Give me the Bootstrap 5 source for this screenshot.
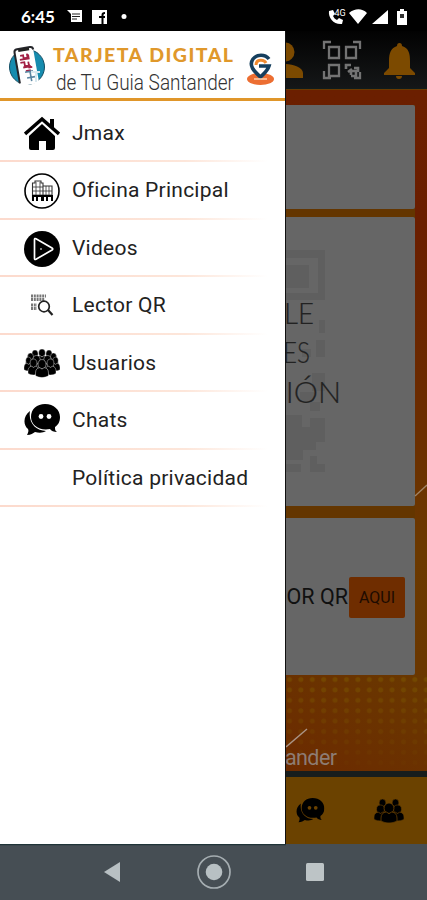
<!DOCTYPE html>
<html lang="es">
<head>
<meta charset="utf-8">
<meta name="viewport" content="width=device-width, initial-scale=1">
<title>Tarjeta Digital</title>
<link href="https://cdn.jsdelivr.net/npm/bootstrap@5.3.0/dist/css/bootstrap.min.css" rel="stylesheet">
<style>
body{width:427px;height:900px;overflow:hidden;font-family:Roboto,"Noto Sans",sans-serif;background:#000;color:#000}
svg{display:block;flex:none}
.status{height:31px;padding:2px 19px 0 21px;background:#000;color:#fff}
.clock{font:700 17px/1 Lato,sans-serif;width:46px}
.stage{height:813px}
.drawer{width:285px;background:#fff}
.brand{height:70px;border-bottom:3px solid #e0962a}
.menu{padding-top:4px}
.item{height:57.45px;padding-left:24px;font-size:21px;letter-spacing:.24px;color:#222;background:linear-gradient(90deg,#fcdacd,#fde6da 65%,#fff 94%) bottom/100% 2px no-repeat}
.ico{width:36px;height:36px;margin-right:12px}
.page-side{width:142px;border-left:1px solid #111}
.topbar{height:58px;background:linear-gradient(#020202,#151718);border-bottom:1px solid #101c1c}
.wall{height:682px;padding-top:15px;border-top:1px solid #6a3900;background:linear-gradient(#6b1f00,#6a1e00 20%,#6b2b00 45%,#6b3900 68%,#693500)}
.stack{width:129px;background:#643600;border-radius:0 0 3px 0}
.panel{background:#666;border-radius:0 2px 2px 0}
.p1{height:104px}.p2{height:289px;margin-top:8px}.p3{height:157px;margin-top:12px;padding-top:2px}
.reader{font-size:21.5px;color:#101010;margin-right:1px}
.aqui{width:56px;height:41px;margin-right:10px;background:#6f2d00;border-radius:2px;font-size:16px;color:#1d0b00}
.tabs{height:73px;border-top:6px solid #171d1d;background:#6b4200}
.sysnav{height:56px;background:#464e54}
</style>
<script src="https://cdn.jsdelivr.net/npm/bootstrap@5.3.0/dist/js/bootstrap.bundle.min.js"></script>
</head>
<body class="d-flex flex-column m-0">
<svg width="0" height="0" class="position-absolute">
<defs>
<symbol id="chat" viewBox="0 0 36 32"><path d="M6 7C-1 12-1 21 4 25c1 2 0 4-1 6 4 0 6-2 8-3 4 1 8 1 11-1C12 27 4 19 6 7Z"/><path d="M21 0c9 0 15 6 15 13 0 5-2 8-5 10 0 2 0 4 2 5-3 0-6-1-7-3C15 27 7 21 7 13 7 5 13 0 21 0Z"/><g fill="var(--eye,#fff)"><circle cx="17" cy="12.500" r="2.400"/><circle cx="25" cy="12.500" r="2.400"/></g></symbol>
<symbol id="dude" viewBox="0 0 12 16" preserveAspectRatio="none" overflow="visible"><ellipse cx="6" cy="4.200" rx="3.700" ry="4.200"/><path d="M0 14.500V12c0-3 1.500-4.500 4-4.800l2 1.300 2-1.300c2.500.3 4 1.800 4 4.800v2.500c-4 2-8 2-12 0Z"/></symbol>
</defs>
</svg>
<div class="status d-flex align-items-center">
<span class="clock">6:45</span>
<svg width="62" height="16" viewBox="0 0 62 16" fill="#fff"><path d="M0 1h15v12H4V5Z"/><path d="M5 5h8M5 7.500h8M5 10h5" stroke="#222" stroke-width="1.200"/><path d="M25 1h15v14H25Z"/><path d="M34.500 15V9h-2.500V7h2.500V6c0-2 1-3 3.500-3v2c-1.500 0-1.500.5-1.500 2h1.500v2h-1.500v6Z" fill="#000"/><circle cx="57" cy="7.500" r="2.500"/></svg>
<svg class="ms-auto" width="80" height="18" viewBox="0 0 80 18" fill="#fff"><path d="M1 3l4-1 2 4-2 2c1 2 2 3 4 4l2-2 4 2-1 4C6 17 0 10 1 3Z"/><text x="6.500" y="8" font-family="Roboto,sans-serif" font-size="9">4G</text><path d="M21 5c6-5 13-5 18 0l-9 11ZM60 2v14H44ZM69 3h3V1h4v2h3v14h-10Z"/><path d="M72 6h4v4h-4Z" fill="#333"/></svg>
</div>
<main class="stage d-flex">
<aside class="drawer flex-shrink-0">
<div class="brand">
<svg width="285" height="67" viewBox="0 0 285 67">
<circle cx="27" cy="36" r="17.500" fill="#168caf"/><circle cx="27" cy="36" r="17.500" fill="none" stroke="#154e64" stroke-width="1"/>
<g transform="rotate(-10 26 35)"><rect x="17" y="17" width="19" height="37" rx="3" fill="#fff"/><path d="M17 51V20q0-3 3-3h13q3 0 3 3" fill="none" stroke="#25262b" stroke-width="2"/><path d="M21 17h11v3H21Z" fill="#222"/><path d="M22 24h3v3h4v-4m-8 8h4v4h5m-9-7h9v-4m-7 12h8m-6 4h5m-1-9v6h3" fill="none" stroke="#a22045" stroke-width="1.800"/><path d="M24 41h8m-3 0v10m-4-4h8" stroke="#5985a1" stroke-width="1.600"/></g><path d="M31 41h9M36 42v9" stroke="#d8e8ef" stroke-width="2"/>
<text x="53" y="31" font-family="Lato,sans-serif" font-size="19.500" font-weight="900" fill="#e0982b" textLength="180" lengthAdjust="spacing">TARJETA DIGITAL</text>
<text x="56" y="58.500" font-family="Roboto,sans-serif" font-size="22" font-weight="300" fill="#333" textLength="178" lengthAdjust="spacingAndGlyphs">de Tu Guia Santander</text>
<ellipse cx="260.500" cy="48" rx="13.500" ry="6" fill="#ec6e32"/><path d="M260.500 48C246 33 249 23 260.500 23s15 11 0 25Z" fill="#fff"/><path d="M269 28c-4-5-12-5-16 0-5 7 2 13 7.500 18 4-4 7-6 8.500-11h-10" fill="none" stroke="#153f5e" stroke-width="3.600"/><path d="M256 34c0-6 8-6 10-2" fill="none" stroke="#f08b30" stroke-width="3"/><path d="M254 48h13" stroke="#ffd1ae" stroke-width="1.500"/>
</svg>
</div>
<nav class="menu">
<div class="item d-flex align-items-center"><svg class="ico" viewBox="0 0 36 36"><path d="M5 20 18 8l13 12v12q0 2-2 2h-7v-9h-7v9H7q-2 0-2-2Z"/><path d="M1 18 18 3l17 15" fill="none" stroke="#fff" stroke-width="6"/><path d="M1 18 18 3l17 15" fill="none" stroke="#000" stroke-width="3.500"/><path d="M26 3h4v10l-4-4Z"/></svg>Jmax</div>
<div class="item d-flex align-items-center"><svg class="ico" viewBox="0 0 36 36" fill="none" stroke="#000"><circle cx="18" cy="18" r="17" stroke-width="1.600"/><path d="M8.500 27V10H11V8h6v2h2v17M19 13h9v14" stroke-width="1.100" stroke="#333"/><path d="M8 14h11M8 18h20M8 22h20M12 9v13M16 9v13M22 13v9M25 13v9" stroke-width=".8" stroke="#333"/><path d="M9 28v-5h9v5m-5-5v5m6 0v-5h9v5m-5-5v5" stroke-width="2"/></svg>Oficina Principal</div>
<div class="item d-flex align-items-center"><svg class="ico" viewBox="0 0 36 36"><circle cx="18" cy="18" r="18"/><path d="M10.500 8.500Q10.500 7 12 7.700L28 17q1.500 1 0 2L12 28.300q-1.500.7-1.500-.8Z" fill="none" stroke="#fff" stroke-width="1.700"/><circle cx="17" cy="18" r="1" fill="#aaa"/></svg>Videos</div>
<div class="item d-flex align-items-center"><svg class="ico" viewBox="0 0 36 36" fill="none"><path d="M7 8h15M7 11.500h14M7 17h6M7 20.500h6" stroke="#777" stroke-width="2.800" stroke-dasharray="2 .8"/><circle cx="20" cy="18.500" r="5.300" stroke="#222" stroke-width="1.700"/><path d="m24 22 4.500 5" stroke="#222" stroke-width="2.200"/></svg>Lector QR</div>
<div class="item d-flex align-items-center"><svg class="ico" viewBox="0 0 36 36" stroke="#fff" stroke-width=".4"><use href="#dude" x="6" y="5" width="10" height="15"/><use href="#dude" x="20" y="5" width="10" height="15"/><use href="#dude" x="12.500" y="4" width="11" height="15"/><use href="#dude" x="1.500" y="8" width="10" height="15"/><use href="#dude" x="24.500" y="8" width="10" height="15"/><use href="#dude" x="0" y="12" width="9" height="14"/><use href="#dude" x="27" y="12" width="9" height="14"/><use href="#dude" x="6.500" y="10.500" width="12" height="17"/><use href="#dude" x="17.500" y="10.500" width="12" height="17"/><use href="#dude" x="4" y="14" width="11" height="16"/><use href="#dude" x="21" y="14" width="11" height="16"/><use href="#dude" x="11.500" y="14.500" width="13" height="18"/></svg>Usuarios</div>
<div class="item d-flex align-items-center"><svg class="ico" viewBox="0 0 36 36"><use href="#chat" x="0" y="1" width="36" height="32"/></svg>Chats</div>
<div class="item d-flex align-items-center"><span class="ico"></span>Política privacidad</div>
</nav>
</aside>
<section class="page-side flex-shrink-0 overflow-hidden">
<div class="topbar">
<svg width="141" height="57" viewBox="286 31 141 57"><g fill="#7c4a00"><circle cx="285" cy="52" r="9.500"/><path d="M268 78v-5c0-6 10-9 17-9s18 3 18 9v5ZM397 46q0-3 2.500-3t2.500 3c7 2 8 8 8 15v7l5 5v2h-31v-2l5-5v-7c0-8 2-13 8-15ZM396 76h6q0 3-3 3t-3-3Z"/></g><g fill="none" stroke="#737373" stroke-width="2.300"><path d="M324 49v-7h7M353 42h7v7M324 71v7h7"/><path d="M329 47h10v11h-10ZM346 47h10v11h-10ZM329 65h10v11h-10Z"/><path d="M346 69v-4h5M351 75v-4h5v5h-5M354 68h4v4M348 72l4-3" stroke-width="2.600"/><path d="M360 72v6h-6"/></g></svg>
</div>
<div class="wall">
<div class="stack">
<div class="panel p1"></div>
<div class="panel p2">
<svg width="141" height="289" viewBox="286 217 141 289" overflow="visible"><g fill="#5f5f5f"><path d="M286 250h39v50h-39v-7h32v-35h-32Z"/><path d="M286 265h23v23h-23Z"/><path d="M319 320h6v13h-6ZM316 340h9v17h-9ZM302 349h9v8h-9ZM312 373h13v18h-13ZM300 392h14v9h-14ZM310 402h10v9h-10ZM286 415h16v12h8v-9h15v24h-9v8h-13v10h-17ZM286 464h15v8h-15ZM310 456h7v8h8v8h-15Z"/></g><g font-family="Lato,sans-serif" font-size="29" font-weight="300" fill="#222" stroke="#222" stroke-width=".2"><text x="284" y="324" textLength="30" lengthAdjust="spacingAndGlyphs">LE</text><text x="283" y="363" textLength="27" lengthAdjust="spacingAndGlyphs">ES</text><text x="341" y="403" text-anchor="end" textLength="76" lengthAdjust="spacingAndGlyphs">CIÓN</text></g><path d="m415 496 12-11" stroke="#a08468" stroke-width="1.300"/></svg>
</div>
<div class="panel p3 d-flex align-items-center justify-content-end"><span class="reader text-nowrap">OR QR</span><span class="aqui d-flex align-items-center justify-content-center">AQUI</span></div>
</div>
<svg width="141" height="96" viewBox="286 675 141 96"><defs><pattern id="dots" width="11.400" height="10.400" x="284" y="674" patternUnits="userSpaceOnUse"><circle cx="5.500" cy="5.500" r="2.500" fill="#7c5700"/></pattern><linearGradient id="warm" x1="0" y1="1" x2="1" y2="0"><stop stop-color="#6c2a00"/><stop offset="1" stop-color="#693800"/></linearGradient><linearGradient id="fade" x2="0" y2="1"><stop stop-color="#ddd"/><stop offset="1" stop-color="#111"/></linearGradient><mask id="fm"><path d="M286 675h141v96H286Z" fill="url(#fade)"/></mask></defs><path d="M286 675h141v96H286Z" fill="url(#warm)"/><path d="M286 675h141v96H286Z" fill="url(#dots)" mask="url(#fm)" opacity=".65"/><path d="m286 747 21-18" stroke="#aa9486" stroke-width="1.400"/><text x="285" y="765" font-family="Roboto,sans-serif" font-size="21.500" fill="#8d7c73" textLength="52">ander</text></svg>
</div>
<div class="tabs"><svg width="141" height="67" viewBox="286 777 141 67" style="--eye:#6b4200"><use href="#chat" x="296" y="798" width="28.500" height="25"/><g stroke="#6b4200" stroke-width=".6"><use href="#dude" x="377" y="799" width="11" height="15"/><use href="#dude" x="390" y="799" width="11" height="15"/><use href="#dude" x="374" y="805" width="13" height="16"/><use href="#dude" x="391" y="805" width="13" height="16"/><use href="#dude" x="381" y="803" width="16" height="20"/></g></svg></div>
</section>
</main>
<footer class="sysnav"><svg width="427" height="56" viewBox="0 844 427 56" fill="#b8c0c3"><path d="M0 844h286v1.200H0Z" fill="#203438"/><path d="m104 872 16-10v20Z"/><circle cx="214" cy="872" r="8.300"/><circle cx="214" cy="872" r="16" fill="none" stroke="#a5adb1" stroke-width="1.700"/><rect x="306" y="863" width="18" height="18" rx="1.500" fill="#bdc4c6"/></svg></footer>
</body>
</html>
